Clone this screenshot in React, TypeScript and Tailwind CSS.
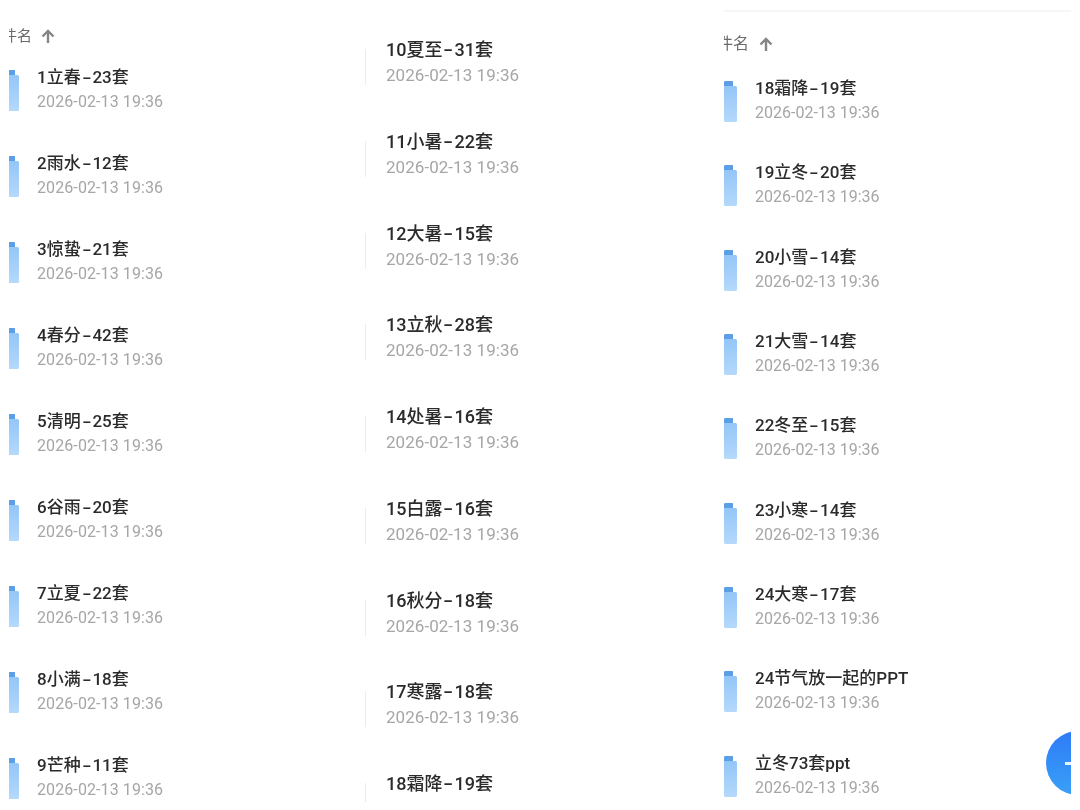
const font = { fontFamily: 'Roboto, "Noto Sans CJK SC", sans-serif' };

function FileIcon({ id }: { id: string }) {
  return (
    <svg viewBox="0 0 13 41" className="w-[13px] h-[41px] shrink-0">
      <defs>
        <linearGradient id={id} x1="0" y1="0" x2="0" y2="1">
          <stop offset="0" stopColor="#8fc3f7" />
          <stop offset="1" stopColor="#b4d9fb" />
        </linearGradient>
      </defs>
      <path d="M0 1.5Q0 0 1.5 0H8Q9 0 9 1V5H11.5Q13 5 13 6.5V39.5Q13 41 11.5 41H1.5Q0 41 0 39.5Z" fill={`url(#${id})`} />
      <path d="M0 1.5Q0 0 1.5 0H8Q9 0 9 1V5H0Z" fill="#5d9fe6" />
    </svg>
  );
}

function Sort({ shift, big }: { shift: string; big?: boolean }) {
  return (
    <div className={`flex items-center leading-[20px] text-[#6b6b6b] ${big ? "text-[16px]" : "text-[15px]"} ${shift}`}>
      <span>件名</span>
      <svg viewBox="0 0 14 14" className={`w-[14px] h-[14px] ${big ? "ml-[10px]" : "ml-[9px]"}`} fill="none" stroke="#858585" strokeWidth="2.4">
        <path d="M7 14V2M1.5 7.5L7 2l5.5 5.5" />
      </svg>
    </div>
  );
}

function Title({ title, wide }: { title: string; wide?: boolean }) {
  const parts = title.split("-");
  return (
    <div className={`leading-[24px] font-medium text-[#2b2b2b] whitespace-nowrap ${wide ? "text-[18px]" : "text-[17px]"}`}>
      {parts[0]}
      {parts.length > 1 && (
        <>
          <span className="inline-block scale-x-[1.6] mx-[3px]">-</span>
          {parts[1]}
        </>
      )}
    </div>
  );
}

function Time({ cls }: { cls: string }) {
  return <div className={`text-[#a6a6a6] whitespace-nowrap ${cls}`}>2026-02-13 19:36</div>;
}

const a = ["1立春-23套", "2雨水-12套", "3惊蛰-21套", "4春分-42套", "5清明-25套", "6谷雨-20套", "7立夏-22套", "8小满-18套", "9芒种-11套"];
const b = ["10夏至-31套", "11小暑-22套", "12大暑-15套", "13立秋-28套", "14处暑-16套", "15白露-16套", "16秋分-18套", "17寒露-18套", "18霜降-19套"];
const c = ["18霜降-19套", "19立冬-20套", "20小雪-14套", "21大雪-14套", "22冬至-15套", "23小寒-14套", "24大寒-17套", "24节气放一起的PPT", "立冬73套ppt"];

export default function App() {
  return (
    <div className="flex items-start w-[1080px] h-[810px] overflow-hidden bg-white blur-[0.4px]" style={font}>
      <div className="w-[356px] ml-[9px] shrink-0 overflow-hidden pt-[26px]">
        <Sort shift="-ml-[7px]" />
        <div className="mt-[19px]">
          {a.map((t, i) => (
            <div key={t} className="h-[86px] flex items-start">
              <div className="-ml-[3px] mt-[5px]"><FileIcon id={`a${i}`} /></div>
              <div className="ml-[18px]">
                <Title title={t} />
                <Time cls="text-[16px] leading-[24px] mt-[1px] tracking-[0.1px]" />
              </div>
            </div>
          ))}
        </div>
      </div>
      <div className="w-[359px] h-[802px] shrink-0 overflow-hidden pt-[38px]">
        {b.map((t, i) => (
          <div key={t} className="h-[91.75px] flex items-start">
            <div className="w-[1px] h-[36px] mt-[11px] bg-[#e8edf2]" />
            <div className="ml-[20px]">
              <Title title={t} wide />
              {i < 8 && <Time cls="text-[17px] leading-[24px] mt-[1px] tracking-[0.05px]" />}
            </div>
          </div>
        ))}
      </div>
      <div className="w-[347px] h-[810px] shrink-0 overflow-hidden relative">
        <div className="h-[2px] mt-[10px] bg-[#f6f6f6]" />
        <div className="pt-[22px]">
          <Sort shift="-ml-[7px]" big />
        </div>
        <div className="mt-[21px]">
          {c.map((t, i) => (
            <div key={t} className="h-[84.35px] flex items-start gap-[18px]">
              <div className="mt-[6px]"><FileIcon id={`c${i}`} /></div>
              <div className="pt-[1px]">
                <Title title={t} />
                <Time cls="text-[16px] leading-[24px] mt-[1px]" />
              </div>
            </div>
          ))}
        </div>
        <div className="absolute left-[322px] top-[731px] w-[64px] h-[64px] rounded-full bg-gradient-to-b from-[#2f7bf6] to-[#3aa0f8] flex items-center">
          <div className="w-[6px] h-[3px] ml-[19px] bg-white/90" />
        </div>
      </div>
    </div>
  );
}
